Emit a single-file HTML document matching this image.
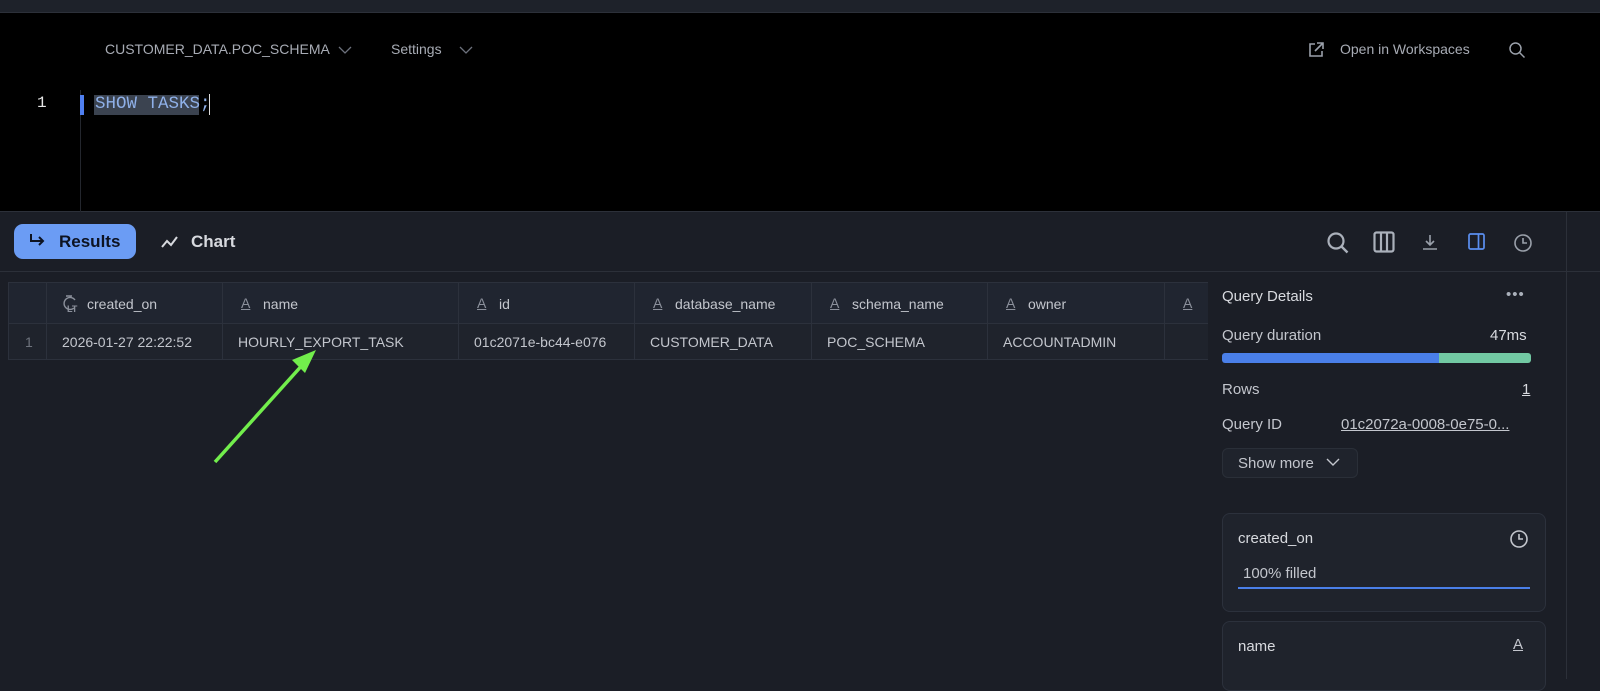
<!DOCTYPE html>
<html><head><meta charset="utf-8"><style>
*{box-sizing:border-box;margin:0;padding:0}
body{width:1600px;height:679px;overflow:hidden;background:#1b1e26;font-family:"Liberation Sans",sans-serif;position:relative;color:#c9ccd3}
.abs{position:absolute}
.top{left:0;top:0;width:1600px;height:13px;background:#1e222a;border-bottom:1px solid #2c3039}
.editor{left:0;top:13px;width:1600px;height:199px;background:#000;border-bottom:1px solid #2c3039}
.t{font-size:14px;color:#a3a7b1}
.hdr{position:absolute;top:282px;height:42px;background:#202530;border:1px solid #2c313c;border-left:none}
.cell{position:absolute;top:324px;height:36px;background:#1f232c;border:1px solid #2c313c;border-left:none;border-top:none;font-size:14px;color:#c3c6cd;padding:10px 0 0 15px;white-space:nowrap;overflow:hidden}
.hdr span.ic{position:absolute;left:18px;top:12px;font-size:14px;color:#8b909b;text-decoration:underline}
.hdr span.lb{position:absolute;left:40px;top:13px;font-size:14px;color:#c3c6cd}
</style></head><body>
<div class="abs top"></div>
<div class="abs editor">
 <div class="abs t" style="left:105px;top:28px;color:#a8acb5">CUSTOMER_DATA.POC_SCHEMA</div>
 <svg class="abs" style="left:338px;top:32px" width="14" height="10"><path d="M1 2l6 6 6-6" stroke="#6c717c" fill="none" stroke-width="1.3"/></svg>
 <div class="abs t" style="left:391px;top:28px;color:#a8acb5">Settings</div>
 <svg class="abs" style="left:459px;top:32px" width="14" height="10"><path d="M1 2l6 6 6-6" stroke="#6c717c" fill="none" stroke-width="1.3"/></svg>
 <svg class="abs" style="left:1307px;top:28px" width="18" height="18"><path d="M8 3H3v12h12v-5M10 2h6v6M16 2l-8 8" stroke="#9aa0aa" fill="none" stroke-width="1.6"/></svg>
 <div class="abs t" style="left:1340px;top:28px;color:#a8acb5">Open in Workspaces</div>
 <svg class="abs" style="left:1508px;top:28px" width="18" height="18"><circle cx="7.5" cy="7.5" r="5.5" stroke="#9aa0aa" fill="none" stroke-width="1.5"/><path d="M11.5 11.5l5 5" stroke="#9aa0aa" stroke-width="1.5"/></svg>
 <div class="abs" style="left:37px;top:81px;font-family:'Liberation Mono',monospace;font-size:16px;color:#e6e6e6">1</div>
 <div class="abs" style="left:80px;top:77px;width:1px;height:122px;background:#23262d"></div>
 <div class="abs" style="left:80px;top:82px;width:4px;height:20px;background:#4f7ff0"></div>
 <div class="abs" style="left:94px;top:82px;height:20px;width:105px;background:#3b4350"></div>
 <div class="abs" style="left:95px;top:81px;font-family:'Liberation Mono',monospace;font-size:17.5px;color:#8fb0e8;white-space:nowrap">SHOW TASKS;</div>
 <div class="abs" style="left:209px;top:81px;width:1px;height:21px;background:#ddd"></div>
</div>
<div class="abs" style="left:0;top:271px;width:1600px;height:1px;background:#2c3039"></div>
<div class="abs" style="left:14px;top:224px;width:122px;height:35px;background:#6b9cf4;border-radius:9px"></div>
<svg class="abs" style="left:28px;top:233px" width="18" height="16"><path d="M3 1v7h12M11 4l4 4-4 4" stroke="#0d1322" fill="none" stroke-width="2"/></svg>
<div class="abs" style="left:59px;top:232px;font-size:17px;color:#0d1322;font-weight:bold">Results</div>
<svg class="abs" style="left:161px;top:234px" width="18" height="16"><path d="M1 13l5-6 4 4 6-8" stroke="#d7d9de" fill="none" stroke-width="2"/></svg>
<div class="abs" style="left:191px;top:232px;font-size:17px;color:#d7d9de;font-weight:bold">Chart</div>
<svg class="abs" style="left:1326px;top:231px" width="24" height="24"><circle cx="10" cy="10" r="7.5" stroke="#aab0ba" fill="none" stroke-width="2.2"/><path d="M15.5 15.5l6 6" stroke="#aab0ba" stroke-width="2.4"/></svg>
<svg class="abs" style="left:1373px;top:231px" width="22" height="22"><rect x="1.5" y="1.5" width="19" height="19" rx="2" stroke="#aab0ba" fill="none" stroke-width="2.2"/><path d="M8 2v18M14 2v18" stroke="#aab0ba" stroke-width="2.2"/></svg>
<svg class="abs" style="left:1421px;top:233px" width="18" height="18"><path d="M9 2v10M5 8l4 4 4-4M2 16h14" stroke="#9aa0aa" fill="none" stroke-width="1.6"/></svg>
<svg class="abs" style="left:1468px;top:233px" width="18" height="18"><rect x="1" y="1" width="15" height="15" rx="1.5" stroke="#5b8ff0" fill="none" stroke-width="1.7"/><path d="M10.5 1v15" stroke="#5b8ff0" stroke-width="1.7"/></svg>
<svg class="abs" style="left:1513px;top:233px" width="20" height="20"><circle cx="10" cy="10" r="8" stroke="#9aa0aa" fill="none" stroke-width="1.6"/><path d="M10 5v5h4" stroke="#9aa0aa" fill="none" stroke-width="1.6"/></svg>

<div class="hdr" style="left:8px;width:39px;border-left:1px solid #2c313c"></div>
<div class="hdr" style="left:47px;width:176px"><svg class="abs" style="left:14px;top:12px" width="20" height="18"><path d="M5 1h6M14 5a6 6 0 1 0-1 8" stroke="#8b909b" fill="none" stroke-width="1.4"/><text x="6" y="17" font-size="9" fill="#8b909b" font-family="Liberation Sans" font-weight="bold">LT</text></svg><span class="lb">created_on</span></div>
<div class="hdr" style="left:223px;width:236px"><span class="ic">A</span><span class="lb">name</span></div>
<div class="hdr" style="left:459px;width:176px"><span class="ic">A</span><span class="lb">id</span></div>
<div class="hdr" style="left:635px;width:177px"><span class="ic">A</span><span class="lb">database_name</span></div>
<div class="hdr" style="left:812px;width:176px"><span class="ic">A</span><span class="lb">schema_name</span></div>
<div class="hdr" style="left:988px;width:177px"><span class="ic">A</span><span class="lb">owner</span></div>
<div class="hdr" style="left:1165px;width:43px;border-right:none"><span class="ic">A</span></div>
<div class="cell" style="left:8px;width:39px;border-left:1px solid #2c313c;color:#6e737d;padding-left:16px">1</div>
<div class="cell" style="left:47px;width:176px">2026-01-27 22:22:52</div>
<div class="cell" style="left:223px;width:236px">HOURLY_EXPORT_TASK</div>
<div class="cell" style="left:459px;width:176px">01c2071e-bc44-e076</div>
<div class="cell" style="left:635px;width:177px">CUSTOMER_DATA</div>
<div class="cell" style="left:812px;width:176px">POC_SCHEMA</div>
<div class="cell" style="left:988px;width:177px">ACCOUNTADMIN</div>
<div class="cell" style="left:1165px;width:43px;border-right:none"></div>

<svg class="abs" style="left:200px;top:340px" width="130" height="130"><path d="M15 122L105 22" stroke="#72ee4c" stroke-width="3.5"/><path d="M116 10l-24 10 13 13z" fill="#72ee4c"/></svg>

<div class="abs" style="left:1222px;top:288px;font-size:15px;color:#d8dadf">Query Details</div>
<div class="abs" style="left:1506px;top:286px;font-size:15px;color:#aab0ba;letter-spacing:1px">•••</div>
<div class="abs" style="left:1222px;top:327px;font-size:15px;color:#c3c6cd">Query duration</div>
<div class="abs" style="left:1490px;top:327px;font-size:15px;color:#d8dadf">47ms</div>
<div class="abs" style="left:1222px;top:353px;width:217px;height:10px;background:#4a7fe8;border-radius:3px 0 0 3px"></div>
<div class="abs" style="left:1439px;top:353px;width:92px;height:10px;background:#72c9a3;border-radius:0 3px 3px 0"></div>
<div class="abs" style="left:1222px;top:381px;font-size:15px;color:#c3c6cd">Rows</div>
<div class="abs" style="left:1522px;top:381px;font-size:15px;color:#d8dadf;text-decoration:underline">1</div>
<div class="abs" style="left:1222px;top:416px;font-size:15px;color:#c3c6cd">Query ID</div>
<div class="abs" style="left:1341px;top:416px;font-size:15px;color:#c3c6cd;text-decoration:underline">01c2072a-0008-0e75-0...</div>
<div class="abs" style="left:1222px;top:448px;width:136px;height:30px;background:#1f232c;border:1px solid #2a2f38;border-radius:6px"></div>
<div class="abs" style="left:1238px;top:455px;font-size:15px;color:#c3c6cd">Show more</div>
<svg class="abs" style="left:1326px;top:457px" width="14" height="10"><path d="M1 2l6 6 6-6" stroke="#c3c6cd" fill="none" stroke-width="1.4"/></svg>
<div class="abs" style="left:1222px;top:513px;width:324px;height:99px;background:#1f232c;border:1px solid #2c313c;border-radius:8px"></div>
<div class="abs" style="left:1238px;top:530px;font-size:15px;color:#d8dadf">created_on</div>
<svg class="abs" style="left:1509px;top:529px" width="20" height="20"><circle cx="10" cy="10" r="8" stroke="#c3c6cd" fill="none" stroke-width="1.6"/><path d="M10 5v5h4" stroke="#c3c6cd" fill="none" stroke-width="1.6"/></svg>
<div class="abs" style="left:1243px;top:565px;font-size:15px;color:#c3c6cd">100% filled</div>
<div class="abs" style="left:1238px;top:587px;width:292px;height:2px;background:#4a7fe8"></div>
<div class="abs" style="left:1222px;top:621px;width:324px;height:70px;background:#1f232c;border:1px solid #2c313c;border-radius:8px"></div>
<div class="abs" style="left:1238px;top:638px;font-size:15px;color:#d8dadf">name</div>
<div class="abs" style="left:1513px;top:636px;font-size:15px;color:#c3c6cd;text-decoration:underline">A</div>
<div class="abs" style="left:1566px;top:212px;width:1px;height:467px;background:#2c3039"></div>
</body></html>
